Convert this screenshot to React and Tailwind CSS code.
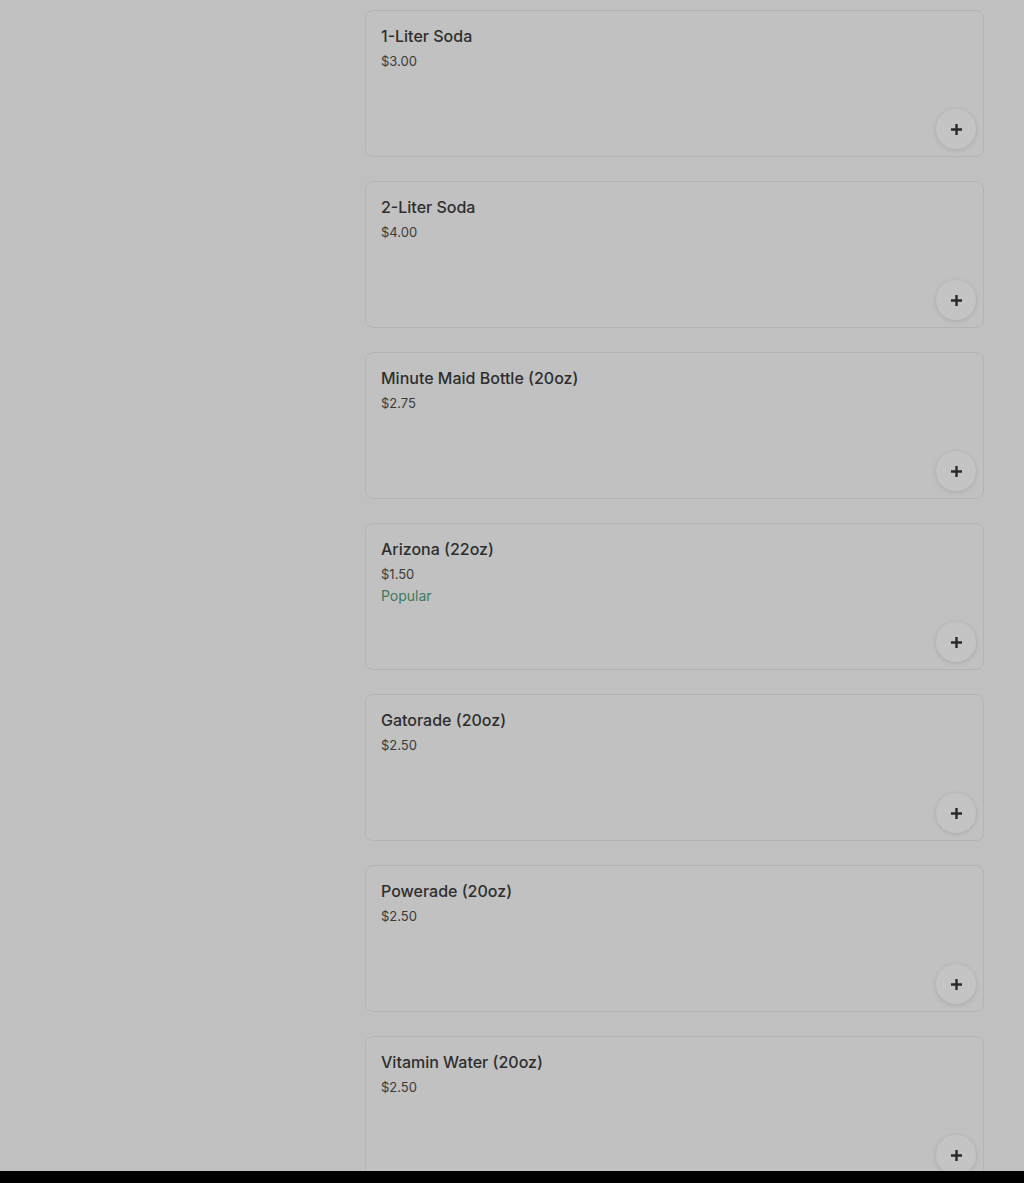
import React from "react";

const items = [
  { name: "1-Liter Soda", price: "$3.00" },
  { name: "2-Liter Soda", price: "$4.00" },
  { name: "Minute Maid Bottle (20oz)", price: "$2.75" },
  { name: "Arizona (22oz)", price: "$1.50", popular: true },
  { name: "Gatorade (20oz)", price: "$2.50" },
  { name: "Powerade (20oz)", price: "$2.50" },
  { name: "Vitamin Water (20oz)", price: "$2.50" },
];

const ItemCard = ({ item }) => (
  <div className="relative h-[147px] shrink-0 rounded-lg border border-[#b4b4b4] bg-[#c1c1c1] px-[15px] pt-[15px]">
    <div className="text-[16px] font-medium leading-[20px] text-[#2e2e2e]">{item.name}</div>
    <div className="mt-[5px] text-[13px] leading-[20px] text-[#3a3a3a]">{item.price}</div>
    {item.popular && (
      <div className="mt-[2px] text-[14px] leading-[20px] text-[#3f7a5e]">Popular</div>
    )}
    <button className="absolute bottom-[7px] right-[7px] flex h-[40px] w-[40px] items-center justify-center rounded-full bg-[#c4c4c4] shadow-[0_1px_5px_rgba(0,0,0,0.12)]">
      <svg width="13" height="13" viewBox="0 0 13 13">
        <path d="M6.5 1v11M1 6.5h11" stroke="#2a2a2a" strokeWidth="2.4" />
      </svg>
    </button>
  </div>
);

export default function App() {
  return (
    <div className="flex h-[1183px] flex-col bg-black font-['Inter',sans-serif]">
      <div className="h-[1171px] overflow-hidden bg-[#c0c0c0]">
        <div className="ml-[365px] mr-[40px] flex flex-col gap-[24px] pt-[10px]">
          {items.map((item) => (
            <ItemCard key={item.name} item={item} />
          ))}
        </div>
      </div>
    </div>
  );
}
